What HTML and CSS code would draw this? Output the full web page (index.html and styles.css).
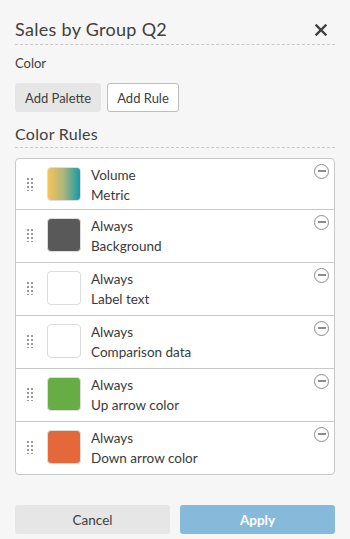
FILE: index.html
```html
<!DOCTYPE html>
<html lang="en">
    <head>
        <meta charset="UTF-8">
        <meta name="viewport" content="width=device-width, initial-scale=1.0">
        <title>Sales by Group Q2</title>
        <link rel="stylesheet" href="styles.css">
    </head>
    <body>
        <div class="panel">
            <div class="panel-head">
                <h2 class="panel-title">Sales by Group Q2</h2>
                <button class="close-btn" type="button">
                    <svg width="12" height="12" viewBox="0 0 12 12"><path d="M1.5 1.5 L10.5 10.5 M10.5 1.5 L1.5 10.5" stroke="#404040" stroke-width="2.4" stroke-linecap="square"/></svg>
                </button>
            </div>
            <p class="field-label">Color</p>
            <div class="btn-row">
                <button class="btn btn-grey" type="button">Add Palette</button>
                <button class="btn btn-outline" type="button">Add Rule</button>
            </div>
            <h3 class="section-title">Color Rules</h3>

            <ul class="rules">
                <li class="rule">
                    <span class="grip"></span>
                    <span class="swatch swatch-gradient"></span>
                    <div class="rule-text"><span>Volume</span><span>Metric</span></div>
                    <span class="remove"></span>
                </li>
                <li class="rule">
                    <span class="grip"></span>
                    <span class="swatch swatch-dark"></span>
                    <div class="rule-text"><span>Always</span><span>Background</span></div>
                    <span class="remove"></span>
                </li>
                <li class="rule">
                    <span class="grip"></span>
                    <span class="swatch swatch-white"></span>
                    <div class="rule-text"><span>Always</span><span>Label text</span></div>
                    <span class="remove"></span>
                </li>
                <li class="rule">
                    <span class="grip"></span>
                    <span class="swatch swatch-white"></span>
                    <div class="rule-text"><span>Always</span><span>Comparison data</span></div>
                    <span class="remove"></span>
                </li>
                <li class="rule">
                    <span class="grip"></span>
                    <span class="swatch swatch-green"></span>
                    <div class="rule-text"><span>Always</span><span>Up arrow color</span></div>
                    <span class="remove"></span>
                </li>
                <li class="rule">
                    <span class="grip"></span>
                    <span class="swatch swatch-orange"></span>
                    <div class="rule-text"><span>Always</span><span>Down arrow color</span></div>
                    <span class="remove"></span>
                </li>
            </ul>

            <div class="footer">
                <button class="btn-wide btn-cancel" type="button">Cancel</button>
                <button class="btn-wide btn-apply" type="button">Apply</button>
            </div>
        </div>
    </body>
</html>
```

FILE: styles.css
```css
*{
    margin: 0px;
    padding: 0px;
    box-sizing: border-box;
}
body{
    background-color: #f6f6f6;
    font-family: Lato, "Open Sans", sans-serif;
    color: #404040;
}
.panel{
    padding: 17px 15px 0 15px;
}
.panel-head{
    display: flex;
    justify-content: space-between;
    align-items: center;
    padding-bottom: 3px;
    border-bottom: 1px dashed #c8c8c8;
}
.panel-title{
    font-size: 18px;
    line-height: 24px;
    font-weight: 400;
    letter-spacing: 0.3px;
}
.close-btn{
    display: flex;
    border: none;
    background: none;
    margin-right: 8px;
    margin-top: 2px;
    cursor: pointer;
}
.field-label{
    font-size: 13px;
    line-height: 18px;
    margin-top: 9px;
}
.btn-row{
    display: flex;
    gap: 6px;
    margin-top: 11px;
}
.btn{
    font-family: inherit;
    font-size: 13px;
    height: 29px;
    padding: 0 9px;
    border-radius: 3px;
    color: #404040;
    cursor: pointer;
}
.btn-grey{
    background-color: #e6e6e6;
    border: 1px solid #e6e6e6;
}
.btn-outline{
    background-color: #fff;
    border: 1px solid #bdbdbd;
}
.section-title{
    font-size: 16px;
    line-height: 22px;
    font-weight: 400;
    letter-spacing: 0.3px;
    margin-top: 11px;
    padding-bottom: 2px;
    border-bottom: 1px dashed #c8c8c8;
}
.rules{
    list-style: none;
    margin-top: 10px;
    background-color: #fff;
    border: 1px solid #c8c8c8;
    border-radius: 4px;
}
.rule{
    display: flex;
    align-items: flex-start;
    height: 53px;
    padding: 8px 5px 0 10px;
    border-bottom: 1px solid #c8c8c8;
}
.rule:first-child{
    height: 51px;
}
.rule:last-child{
    height: 52px;
    border-bottom: none;
}
.grip{
    width: 7px;
    height: 14px;
    margin-top: 10px;
    background-image: radial-gradient(circle, #9a9a9a 1px, transparent 1.2px);
    background-size: 4px 4px;
}
.swatch{
    width: 34px;
    height: 34px;
    margin-left: 14px;
    border-radius: 4px;
    border: 1px solid #dcdcdc;
}
.swatch-gradient{
    background: linear-gradient(to right, #f7c457, #a9b47f, #139aa8);
}
.swatch-dark{
    background-color: #595959;
}
.swatch-white{
    background-color: #fff;
}
.swatch-green{
    background-color: #67ad45;
}
.swatch-orange{
    background-color: #e5683b;
}
.rule-text{
    display: flex;
    flex-direction: column;
    flex: 1;
    margin-left: 10px;
    margin-top: -2px;
    font-size: 13.5px;
    line-height: 20px;
    color: #3a3a3a;
}
.remove{
    position: relative;
    width: 15px;
    height: 15px;
    margin-top: -3px;
    border: 1.6px solid #8c8c8c;
    border-radius: 50%;
}
.remove::after{
    content: "";
    position: absolute;
    left: 2.5px;
    right: 2.5px;
    top: 5px;
    height: 1.6px;
    background-color: #8c8c8c;
}
.footer{
    display: flex;
    gap: 10px;
    margin-top: 30px;
}
.btn-wide{
    flex: 1;
    height: 29px;
    border: none;
    border-radius: 3px;
    font-family: inherit;
    font-size: 13.5px;
    cursor: pointer;
}
.btn-cancel{
    background-color: #e6e6e6;
    color: #404040;
}
.btn-apply{
    background-color: #87b9da;
    color: #fff;
    font-weight: 700;
}
```
